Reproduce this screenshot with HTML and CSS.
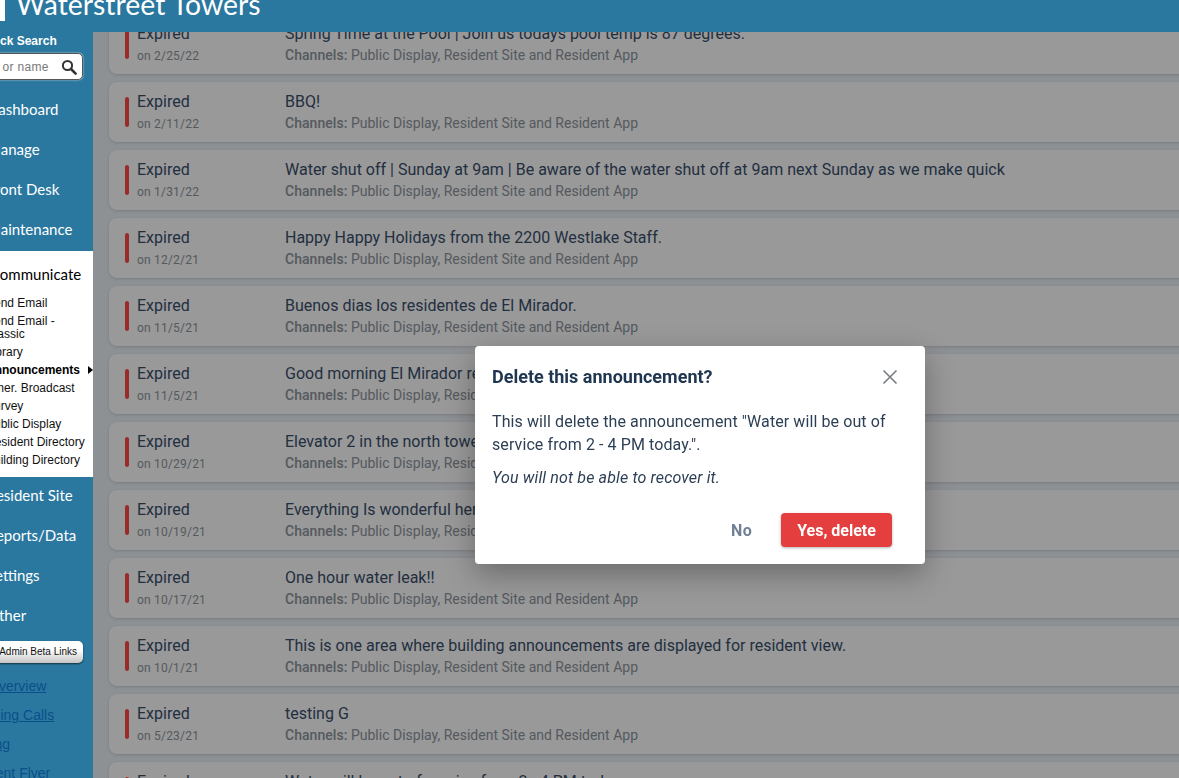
FILE: index.html
```html
<!DOCTYPE html>
<html lang="en">
<head>
<meta charset="utf-8">
<title>Announcements</title>
<link rel="stylesheet" href="styles.css">
</head>
<body>
<div class="app">
  <header class="topbar">
    <div class="logo"></div>
    <h1 class="brand">Waterstreet Towers</h1>
  </header>
  <div class="shell">
    <aside class="sidebar">
      <div class="side-inner">
        <div class="qs-label">Quick Search</div>
        <div class="qs-box">
          <span class="qs-ph">Unit or name</span>
          <svg class="qs-icon" viewBox="0 0 16 16" width="16" height="16"><circle cx="6.5" cy="6.5" r="4.6" fill="none" stroke="#333" stroke-width="2"/><path d="M10 10l4.6 4.6" stroke="#333" stroke-width="2.6" stroke-linecap="round"/></svg>
        </div>
        <nav class="nav">
          <a class="nav-item">Dashboard</a>
          <a class="nav-item">Manage</a>
          <a class="nav-item">Front Desk</a>
          <a class="nav-item">Maintenance</a>
          <div class="nav-open">
            <div class="nav-open-title">Communicate</div>
            <ul class="sub">
              <li class="sub-item">Send Email</li>
              <li class="sub-item sub-wrap">Send Email -<br>Classic</li>
              <li class="sub-item">Library</li>
              <li class="sub-item sub-active">Announcements<span class="arrow"></span></li>
              <li class="sub-item">Emer. Broadcast</li>
              <li class="sub-item">Survey</li>
              <li class="sub-item">Public Display</li>
              <li class="sub-item">Resident Directory</li>
              <li class="sub-item">Building Directory</li>
            </ul>
          </div>
          <a class="nav-item">Resident Site</a>
          <a class="nav-item">Reports/Data</a>
          <a class="nav-item">Settings</a>
          <a class="nav-item">Other</a>
        </nav>
        <button class="beta">Admin Beta Links</button>
        <div class="links">
          <a class="link">Site Overview</a>
          <a class="link">Coaching Calls</a>
          <a class="link">Training</a>
          <a class="link">Resident Flyer</a>
        </div>
      </div>
    </aside>
    <main class="main">
      <div class="list">
        <article class="card"><span class="bar"></span><div class="status"><div class="st">Expired</div><div class="dt">on 2/25/22</div></div><div class="info"><div class="ttl">Spring Time at the Pool | Join us todays pool temp is 87 degrees.</div><div class="ch"><b>Channels:</b> Public Display, Resident Site and Resident App</div></div></article>
        <article class="card"><span class="bar"></span><div class="status"><div class="st">Expired</div><div class="dt">on 2/11/22</div></div><div class="info"><div class="ttl">BBQ!</div><div class="ch"><b>Channels:</b> Public Display, Resident Site and Resident App</div></div></article>
        <article class="card"><span class="bar"></span><div class="status"><div class="st">Expired</div><div class="dt">on 1/31/22</div></div><div class="info"><div class="ttl">Water shut off | Sunday at 9am | Be aware of the water shut off at 9am next Sunday as we make quick</div><div class="ch"><b>Channels:</b> Public Display, Resident Site and Resident App</div></div></article>
        <article class="card"><span class="bar"></span><div class="status"><div class="st">Expired</div><div class="dt">on 12/2/21</div></div><div class="info"><div class="ttl">Happy Happy Holidays from the 2200 Westlake Staff.</div><div class="ch"><b>Channels:</b> Public Display, Resident Site and Resident App</div></div></article>
        <article class="card"><span class="bar"></span><div class="status"><div class="st">Expired</div><div class="dt">on 11/5/21</div></div><div class="info"><div class="ttl">Buenos dias los residentes de El Mirador.</div><div class="ch"><b>Channels:</b> Public Display, Resident Site and Resident App</div></div></article>
        <article class="card"><span class="bar"></span><div class="status"><div class="st">Expired</div><div class="dt">on 11/5/21</div></div><div class="info"><div class="ttl">Good morning El Mirador residents</div><div class="ch"><b>Channels:</b> Public Display, Resident Site and Resident App</div></div></article>
        <article class="card"><span class="bar"></span><div class="status"><div class="st">Expired</div><div class="dt">on 10/29/21</div></div><div class="info"><div class="ttl">Elevator 2 in the north tower</div><div class="ch"><b>Channels:</b> Public Display, Resident Site and Resident App</div></div></article>
        <article class="card"><span class="bar"></span><div class="status"><div class="st">Expired</div><div class="dt">on 10/19/21</div></div><div class="info"><div class="ttl">Everything Is wonderful here</div><div class="ch"><b>Channels:</b> Public Display, Resident Site and Resident App</div></div></article>
        <article class="card"><span class="bar"></span><div class="status"><div class="st">Expired</div><div class="dt">on 10/17/21</div></div><div class="info"><div class="ttl">One hour water leak!!</div><div class="ch"><b>Channels:</b> Public Display, Resident Site and Resident App</div></div></article>
        <article class="card"><span class="bar"></span><div class="status"><div class="st">Expired</div><div class="dt">on 10/1/21</div></div><div class="info"><div class="ttl">This is one area where building announcements are displayed for resident view.</div><div class="ch"><b>Channels:</b> Public Display, Resident Site and Resident App</div></div></article>
        <article class="card"><span class="bar"></span><div class="status"><div class="st">Expired</div><div class="dt">on 5/23/21</div></div><div class="info"><div class="ttl">testing G</div><div class="ch"><b>Channels:</b> Public Display, Resident Site and Resident App</div></div></article>
        <article class="card"><span class="bar"></span><div class="status"><div class="st">Expired</div><div class="dt">on 5/1/21</div></div><div class="info"><div class="ttl">Water will be out of service from 2 - 4 PM today.</div><div class="ch"><b>Channels:</b> Public Display, Resident Site and Resident App</div></div></article>
      </div>
      <div class="overlay"></div>
    </main>
  </div>
  <section class="modal">
    <div class="modal-head">
      <h2 class="modal-title">Delete this announcement?</h2>
      <svg class="modal-x" viewBox="0 0 16 16" width="16" height="16"><path d="M1.5 1.5l13 13M14.5 1.5l-13 13" stroke="#7a7f85" stroke-width="1.7" fill="none"/></svg>
    </div>
    <p class="modal-text">This will delete the announcement "Water will be out of service from 2 - 4 PM today.".</p>
    <p class="modal-note">You will not be able to recover it.</p>
    <div class="modal-foot">
      <button class="btn-no">No</button>
      <button class="btn-yes">Yes, delete</button>
    </div>
  </section>
</div>
</body>
</html>
```
FILE: styles.css
```css
* { box-sizing: border-box; }
html, body { margin: 0; padding: 0; height: 100%; overflow: hidden; }
body { font-family: Roboto, sans-serif; background: #fff; }
.app { width: 1179px; height: 778px; overflow: hidden; display: flex; flex-direction: column; }

.topbar { height: 32px; flex: none; background: #2a789f; display: flex; align-items: flex-start; overflow: hidden; }
.logo { width: 5px; height: 21px; background: #fff; flex: none; }
.brand { margin: -14px 0 0 11px; font: 400 28.4px/36px Lato, sans-serif; color: #fff; white-space: nowrap; }

.shell { flex: 1; display: flex; min-height: 0; }
.sidebar { width: 93px; flex: none; background: #2a789f; overflow: hidden; }
.side-inner { width: 120px; margin-left: -27px; }

.qs-label { font: 700 12px/14px "Liberation Sans", sans-serif; color: #fff; padding: 2px 0 0 7px; white-space: nowrap; }
.qs-box { margin: 5px 0 0 0; width: 110px; height: 27px; background: #fff; border: 1px solid #555; border-radius: 5px; box-shadow: 0 0 2px #ddd; display: flex; align-items: center; justify-content: space-between; padding: 0 5px 0 0; }
.qs-ph { font: 400 12px/14px "Liberation Sans", sans-serif; color: #777; padding-left: 2px; letter-spacing: .35px; white-space: nowrap; }
.qs-icon { flex: none; }

.nav { margin-top: 9px; }
.nav-item { display: block; height: 40px; font: 400 15px/40px Lato, sans-serif; color: #fff; padding-left: 14px; white-space: nowrap; }
.nav-open { background: #fff; height: 226px; padding: 12px 0 0 17px; margin-top: 2px; margin-bottom: -2px; color: #000; }
.nav-open-title { font: 400 15px/22px Lato, sans-serif; color: #000; }
.sub { list-style: none; margin: 9px 0 0; padding: 0; }
.sub-item { font: 400 12px/13px "Liberation Sans", sans-serif; color: #111; padding: 2.5px 0; margin-left: -4px; white-space: nowrap; }
.sub-active { font-weight: 700; color: #000; position: relative; }
.arrow { position: absolute; left: 102px; top: 5px; border-left: 5px solid #000; border-top: 4px solid transparent; border-bottom: 4px solid transparent; }

.beta { display: block; margin: 6px 0 0 0; width: 110px; height: 22px; font: 400 10px/20px "Liberation Sans", sans-serif; color: #111; text-align: right; padding: 0 6px 0 0; border: none; border-radius: 5px; background: linear-gradient(#fff 40%, #c4c4c4); box-shadow: 0 1px 2px rgba(0,0,0,.6); white-space: nowrap; }
.links { margin-top: 9px; padding-left: 14px; margin-left: -27px; width: 160px; }
.link { display: block; font: 400 14px/29px "Liberation Sans", sans-serif; color: #0b4f8a; text-decoration: underline; white-space: nowrap; }

.main { flex: 1; min-width: 0; position: relative; overflow: hidden; background: #edf2f7; }
.list { margin: -18px -40px 0 16px; display: flex; flex-direction: column; gap: 8px; }
.card { height: 60px; flex: none; background: #fff; border-radius: 8px; display: flex; align-items: flex-start; padding-left: 16px; box-shadow: 0 1px 3px rgba(0,0,0,.15); }
.bar { width: 4px; height: 30px; background: #ff4848; border-radius: 2px; flex: none; align-self: center; }
.status { width: 148px; flex: none; margin-left: 8px; padding-top: 9px; }
.st { font-size: 16px; line-height: 22px; color: #3a4f6c; }
.dt { font-size: 12px; line-height: 22px; color: #8e969e; letter-spacing: .2px; }
.info { min-width: 0; padding-top: 9px; }
.ttl { font-size: 16px; line-height: 22px; color: #3a4f6c; white-space: nowrap; }
.ch { font-size: 14px; line-height: 22px; margin-top: -1px; color: #8e969e; white-space: nowrap; }
.ch b { font-weight: 500; letter-spacing: .05px; }
.overlay { position: absolute; inset: 0; background: rgba(0,0,0,.4); }

.modal { position: fixed; left: 475px; top: 346px; width: 450px; height: 218px; background: #fff; border-radius: 4px; padding: 0 17px; box-shadow: 0 10px 30px rgba(0,0,0,.3); color: #2d3f55; }
.modal-head { height: 60px; display: flex; align-items: center; justify-content: space-between; padding: 2px 10px 0 0; }
.modal-title { margin: 0; font-size: 18px; line-height: 24px; font-weight: 700; color: #1e3650; }
.modal-x { flex: none; }
.modal-text { margin: 4px 0 0; font-size: 16px; line-height: 23px; letter-spacing: .09px; }
.modal-note { margin: 10px 0 0; font-size: 16px; line-height: 23px; letter-spacing: .14px; font-style: italic; }
.modal-foot { display: flex; justify-content: flex-end; align-items: center; gap: 29px; margin-top: 24px; padding-right: 16px; }
.btn-no { border: none; background: none; padding: 2px 0 0; font: 700 16px/32px Roboto, sans-serif; color: #718096; letter-spacing: .3px; }
.btn-yes { border: none; width: 111px; height: 34px; border-radius: 4px; background: #e53e3e; color: #fff; font: 700 16px/32px Roboto, sans-serif; padding: 2px 0 0; box-shadow: 0 1px 3px rgba(0,0,0,.3); }
```
